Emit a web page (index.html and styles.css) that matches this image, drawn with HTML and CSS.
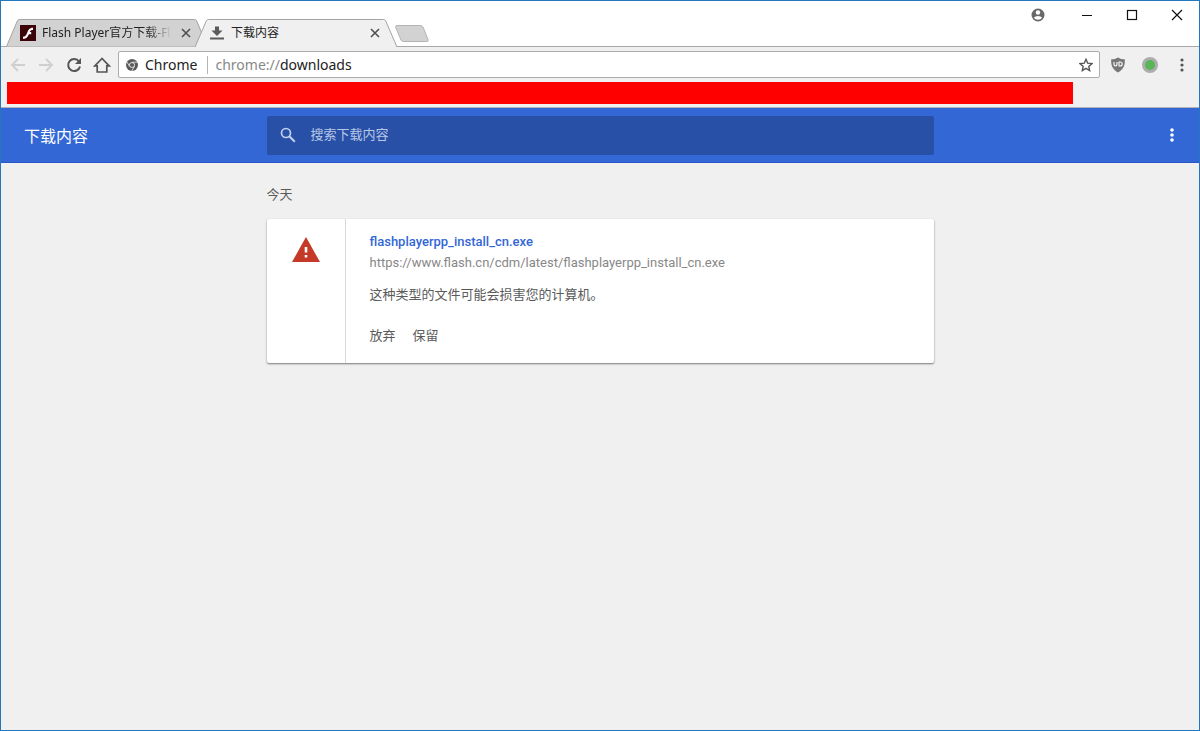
FILE: index.html
```html
<!DOCTYPE html>
<html lang="zh-CN">
<head>
    <meta charset="UTF-8">
    <meta name="viewport" content="width=device-width, initial-scale=1.0">
    <title>下载内容</title>
    <link rel="stylesheet" href="styles.css">
</head>
<body>

    <div class="window">
        <!-- Tab strip -->
        <div class="tab-strip">
            <div class="tabs">
                <div class="tab">
                    <svg class="tab-shape" viewBox="0 0 202 28"><path d="M0.5 27.5 L11.5 1.5 Q12 .5 13.5 .5 H188.5 Q190 .5 190.5 1.5 L201.5 27.5" fill="#d2d2d2" stroke="#a3a3a3"/></svg>
                    <svg class="tab-icon" viewBox="0 0 16 16">
                        <rect width="16" height="16" fill="#3c0407"/>
                        <path d="M13 2.8 C9.5 2.8 8.2 5 7.2 7.8 C6.2 10.5 5.2 11.6 3 11.7 V13.8 C6.6 13.8 7.9 11.7 8.8 9.2 H11.2 V7.1 H9.6 C10.4 5.4 11.2 4.9 13 4.9 Z" fill="#fff"/>
                    </svg>
                    <span class="tab-title tab-title-fade">Flash Player官方下载-Fla</span>
                    <button class="tab-close" aria-label="关闭"><svg width="10" height="10" viewBox="0 0 10 10"><path d="M1 1 L9 9 M9 1 L1 9" stroke="#4f4f4f" stroke-width="1.6"/></svg></button>
                </div>
                <div class="tab tab-active">
                    <svg class="tab-shape" viewBox="0 0 202 28"><path d="M0 28 L11.5 1.5 Q12 .5 13.5 .5 H188.5 Q190 .5 190.5 1.5 L202 28" fill="#f0f0f0" stroke="#a3a3a3"/></svg>
                    <svg class="tab-icon" viewBox="0 0 16 16"><path d="M6 1.500 H10 V5.500 H13.500 L8 11 L2.500 5.500 H6 Z M1 12.500 H15 V14.500 H1 Z" fill="#5a5a5a"/></svg>
                    <span class="tab-title">下载内容</span>
                    <button class="tab-close" aria-label="关闭"><svg width="10" height="10" viewBox="0 0 10 10"><path d="M1 1 L9 9 M9 1 L1 9" stroke="#4f4f4f" stroke-width="1.6"/></svg></button>
                </div>
                <button class="new-tab" aria-label="新标签页"><svg width="34" height="17" viewBox="0 0 34 17"><path d="M2 .5 H25 Q27 .5 28 2 L33 14.5 Q33.500 16.500 32 16.500 H9 Q7 16.500 6 15 L.7 2.500 Q.3 .5 2 .5 Z" fill="#d2d2d2" stroke="#b4b4b4"/></svg></button>
            </div>
            <div class="window-controls">
                <button class="control" aria-label="用户"><svg width="14" height="14" viewBox="0 0 14 14"><circle cx="7" cy="7" r="6.500" fill="#686868"/><circle cx="7" cy="4.500" r="2.200" fill="#fff"/><path d="M2.800 9.700 Q4.200 8 7 8 T11.200 9.700 Q9.800 11.800 7 11.800 T2.800 9.700 Z" fill="#fff"/></svg></button>
                <button class="control" aria-label="最小化"><svg width="12" height="12" viewBox="0 0 12 12"><path d="M1 6.500 H11" stroke="#111"/></svg></button>
                <button class="control" aria-label="最大化"><svg width="12" height="12" viewBox="0 0 12 12"><rect x="1.500" y="1.500" width="9" height="9" fill="none" stroke="#111" stroke-width="1.200"/></svg></button>
                <button class="control" aria-label="关闭窗口"><svg width="12" height="12" viewBox="0 0 12 12"><path d="M1 1 L11 11 M11 1 L1 11" stroke="#111" stroke-width="1.200"/></svg></button>
            </div>
        </div>

        <!-- Toolbar -->
        <div class="toolbar">
            <button class="tool" aria-label="后退"><svg width="16" height="16" viewBox="0 0 16 16"><path d="M15 8 H2.500 M8 2 L2 8 L8 14" fill="none" stroke="#cfcfcf" stroke-width="1.800"/></svg></button>
            <button class="tool" aria-label="前进"><svg width="16" height="16" viewBox="0 0 16 16"><path d="M1 8 H13.500 M8 2 L14 8 L8 14" fill="none" stroke="#cfcfcf" stroke-width="1.800"/></svg></button>
            <button class="tool" aria-label="重新加载"><svg width="16" height="16" viewBox="0 0 16 16"><path d="M13 4.500 A6 6 0 1 0 14 9.500" fill="none" stroke="#555" stroke-width="2"/><path d="M15 1 V7 H9 Z" fill="#555"/></svg></button>
            <button class="tool" aria-label="主页"><svg width="18" height="16" viewBox="0 0 18 16"><path d="M9 1.500 L1.800 8.800 H4.200 V15 H13.800 V8.800 H16.200 Z" fill="none" stroke="#555" stroke-width="1.700"/></svg></button>
            <div class="omnibox">
                <svg width="12" height="12" viewBox="0 0 12 12"><circle cx="6" cy="6" r="6" fill="#595959"/><path d="M6 3.200 H11.500 M3.600 7.400 L.9 2.800 M8.400 7.400 L5.700 12" stroke="#f4f4f4" stroke-width=".8"/><circle cx="6" cy="6" r="2.800" fill="#f4f4f4"/><circle cx="6" cy="6" r="2.100" fill="#595959"/></svg>
                <span class="omnibox-chip">Chrome</span>
                <label class="omnibox-scheme" for="address">chrome://</label>
                <input class="omnibox-input" type="text" id="address" value="downloads">
                <button class="star" aria-label="添加书签"><svg width="14" height="14" viewBox="0 0 14 14"><path d="M7 1.300 L8.700 5.200 L13 5.600 L9.800 8.400 L10.700 12.600 L7 10.400 L3.300 12.600 L4.200 8.400 L1 5.600 L5.300 5.200 Z" fill="none" stroke="#555" stroke-width="1.400"/></svg></button>
            </div>
            <button class="extension" aria-label="uBlock"><svg width="16" height="16" viewBox="0 0 16 16"><path d="M8 .5 C10 1.800 12 2.300 14.800 2.300 C15 8.500 14 12 8 15.500 C2 12 1 8.500 1.200 2.300 C4 2.300 6 1.800 8 .5 Z" fill="#777"/><path d="M4 5 V7.300 Q4 9 5.500 9 T7 7.300 V5 M9 5 V9 H10 Q12.200 9 12.200 7 T10 5 Z" fill="none" stroke="#fff" stroke-width="1.100"/></svg></button>
            <button class="extension" aria-label="扩展程序"><svg width="16" height="16" viewBox="0 0 16 16"><circle cx="8" cy="8" r="8" fill="#adadad"/><circle cx="8" cy="8" r="5" fill="#58b558"/></svg></button>
            <button class="extension" aria-label="菜单"><svg width="16" height="16" viewBox="0 0 16 16"><g fill="#555"><circle cx="8" cy="3" r="1.600"/><circle cx="8" cy="8" r="1.600"/><circle cx="8" cy="13" r="1.600"/></g></svg></button>
        </div>

        <div class="bookmarks-bar">
            <div class="bookmarks-cover"></div>
        </div>

        <!-- Downloads page -->
        <header class="header">
            <h1>下载内容</h1>
            <div class="search">
                <label for="search"><svg width="16" height="16" viewBox="0 0 16 16"><circle cx="6" cy="6" r="4.500" fill="none" stroke="#c3d1f0" stroke-width="1.700"/><path d="M9.300 9.300 L14.800 14.800" stroke="#c3d1f0" stroke-width="2"/></svg></label>
                <input type="text" id="search" placeholder="搜索下载内容">
            </div>
            <button class="page-menu" aria-label="更多操作"><svg width="16" height="16" viewBox="0 0 16 16"><g fill="#fff"><circle cx="8" cy="3" r="1.800"/><circle cx="8" cy="8" r="1.800"/><circle cx="8" cy="13" r="1.800"/></g></svg></button>
        </header>

        <main class="downloads">
            <h2>今天</h2>
            <div class="card">
                <div class="card-icon">
                    <svg width="28" height="25" viewBox="0 0 28 25"><path d="M14 0 L28 25 H0 Z" fill="#c53929"/><path d="M12.700 10 H15.300 V15.500 H12.700 Z M12.700 18 H15.300 V20.600 H12.700 Z" fill="#fff"/></svg>
                </div>
                <div class="card-content">
                    <a class="file-name" href="#">flashplayerpp_install_cn.exe</a>
                    <a class="file-url" href="#">https://www.flash.cn/cdm/latest/flashplayerpp_install_cn.exe</a>
                    <p class="description">这种类型的文件可能会损害您的计算机。</p>
                    <div class="actions">
                        <button>放弃</button>
                        <button>保留</button>
                    </div>
                </div>
            </div>
        </main>
    </div>

</body>
</html>
```
FILE: styles.css
```css
* {
    margin: 0;
    padding: 0;
    box-sizing: border-box;
}

body {
    font-family: Roboto, 'Noto Sans CJK SC', sans-serif;
    font-size: 13px;
    background-color: #f0f0f0;
}

button {
    display: flex;
    align-items: center;
    justify-content: center;
    border: none;
    background: none;
    font: inherit;
    color: inherit;
    cursor: pointer;
}

svg {
    display: block;
    flex-shrink: 0;
}

input {
    border: none;
    outline: none;
    background: none;
    font: inherit;
}

.window {
    min-height: 100vh;
    border: 1px solid #2577bd;
}

/* Tab strip */
.tab-strip {
    display: flex;
    justify-content: space-between;
    height: 46px;
    background-color: #fff;
    border-bottom: 1px solid #a8a8a8;
}

.tabs {
    display: flex;
    align-items: flex-end;
    padding-left: 5px;
    margin-bottom: -1px;
    font-family: 'Noto Sans', 'Noto Sans CJK SC', sans-serif;
    font-size: 12px;
    color: #222;
}

.tab {
    position: relative;
    display: flex;
    align-items: center;
    width: 202px;
    height: 28px;
    padding: 0 14px;
}

.tab-active {
    margin-left: -13px;
}

.tab-shape {
    position: absolute;
    inset: 0;
    width: 100%;
    height: 100%;
}

.tab-icon {
    position: relative;
    width: 16px;
    height: 16px;
}

.tab-title {
    position: relative;
    flex: 1;
    min-width: 0;
    margin-left: 6px;
    line-height: 20px;
    white-space: nowrap;
}

.tab-title-fade {
    mask-image: linear-gradient(to right, #000 80%, transparent);
}

.tab-close {
    position: relative;
    width: 16px;
    height: 16px;
    margin-left: 6px;
}

.new-tab {
    height: 17px;
    margin: 0 0 5px -2px;
}

.window-controls {
    display: flex;
    height: 27px;
}

.control {
    width: 45px;
}

.control:first-child {
    width: 52px;
}

/* Toolbar */
.toolbar {
    display: flex;
    align-items: center;
    height: 35px;
    padding: 0 1px 0 3px;
}

.tool {
    width: 28px;
    height: 28px;
}

.omnibox {
    display: flex;
    flex: 1;
    align-items: center;
    height: 27px;
    margin: 0 2px;
    padding: 0 6px 0 7px;
    background-color: #fff;
    border: 1px solid #adadad;
    border-radius: 2px;
    font-family: 'Noto Sans', sans-serif;
    font-size: 14px;
    line-height: 18px;
    color: #222;
}

.omnibox-chip {
    margin: 0 7px;
    padding-right: 10px;
    border-right: 1px solid #b5b5b5;
}

.omnibox-scheme {
    color: #888;
}

.omnibox-input {
    flex: 1;
    min-width: 0;
    color: #222;
}

.extension {
    width: 32px;
    height: 28px;
}

.bookmarks-bar {
    height: 26px;
    border-bottom: 1px solid #b3b3b3;
}

.bookmarks-cover {
    width: 89%;
    height: 22px;
    margin-left: 6px;
    background-color: #f00;
}

/* Downloads page */
.header {
    display: grid;
    grid-template-columns: 1fr minmax(300px, 667px) 1fr;
    align-items: center;
    height: 55px;
    background-color: #3367d6;
    border-bottom: 1px solid #2a56c6;
    color: #fff;
}

.header h1 {
    padding-left: 23px;
    font-size: 16px;
    font-weight: 400;
}

.search {
    display: flex;
    align-items: center;
    height: 39px;
    padding-left: 13px;
    background-color: #2850a7;
    border-radius: 2px;
}

.search input {
    flex: 1;
    margin-left: 15px;
    padding-bottom: 2px;
    color: #fff;
}

.search input::placeholder {
    color: #b9c7e6;
}

.page-menu {
    justify-self: end;
    width: 32px;
    height: 32px;
    margin-right: 11px;
}

.downloads {
    max-width: 667px;
    margin: 0 auto;
    padding-top: 22px;
    color: #5a5a5a;
}

.downloads h2 {
    margin-bottom: 14px;
    font-size: 13px;
    font-weight: 400;
    line-height: 20px;
}

.card {
    display: flex;
    background-color: #fff;
    border-radius: 2px;
    box-shadow: 0 1px 2px rgba(0, 0, 0, 0.5);
}

.card-icon {
    display: flex;
    justify-content: center;
    width: 79px;
    padding-top: 18px;
    border-right: 1px solid #d8d8d8;
}

.card-content {
    display: flex;
    flex: 1;
    flex-direction: column;
    align-items: flex-start;
    padding: 13px 24px 17px;
    line-height: 20px;
}

.card-content a {
    text-decoration: none;
}

.file-name {
    color: #3367d6;
    font-weight: 500;
}

.file-url {
    margin-top: 1px;
    color: #888;
}

.description {
    margin: 12px 0 21px;
}

.actions {
    display: flex;
    gap: 17px;
}
```
